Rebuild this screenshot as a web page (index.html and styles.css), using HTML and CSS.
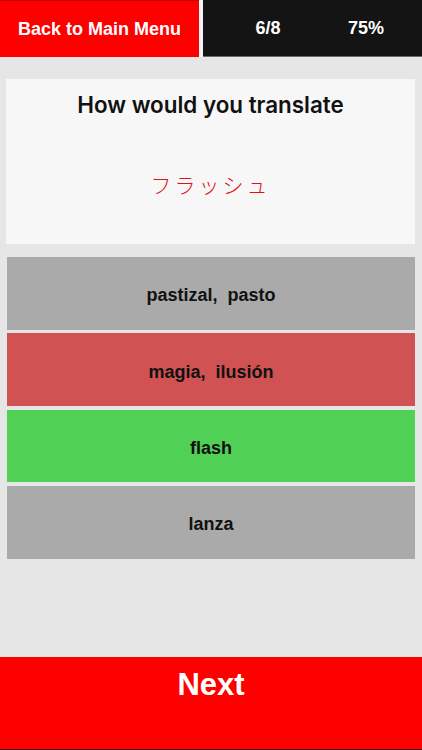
FILE: index.html
```html
<!DOCTYPE html>
<html>
<head>
<meta charset="utf-8">
<link rel="stylesheet" href="styles.css">
</head>
<body>
<div class="screen">
  <header class="topbar">
    <div class="back">Back to Main Menu</div>
    <div class="divider"></div>
    <div class="stats">
      <span class="count">6/8</span>
      <span class="pct">75%</span>
    </div>
  </header>
  <main class="content">
    <section class="card">
      <h1 class="prompt">How would you translate</h1>
      <p class="word">フラッシュ</p>
    </section>
    <div class="options">
      <div class="option neutral">pastizal,&nbsp; pasto</div>
      <div class="option wrong">magia,&nbsp; ilusión</div>
      <div class="option right">flash</div>
      <div class="option neutral">lanza</div>
    </div>
  </main>
  <footer class="next">Next</footer>
</div>
</body>
</html>
```

FILE: styles.css
```css
html, body {
  margin: 0;
  padding: 0;
}
body {
  background: #e6e6e6;
  font-family: "Liberation Sans", Arial, sans-serif;
}
.screen {
  width: 422px;
  height: 750px;
  display: flex;
  flex-direction: column;
  background: #e6e6e6;
}
.topbar {
  height: 57px;
  display: flex;
  background: #f4f4f4;
  flex: none;
}
.back {
  width: 199px;
  background: #ff0000;
  border-top: 1px solid #c00000;
  box-sizing: border-box;
  color: #fff;
  font-weight: bold;
  font-size: 18px;
  display: flex;
  align-items: center;
  justify-content: center;
  padding-top: 1px;
}
.divider {
  width: 4px;
}
.stats {
  flex: 1;
  background: #141414;
  border-bottom: 1px solid #6a6a6a;
  box-sizing: border-box;
  display: flex;
  align-items: center;
  color: #fff;
  font-weight: bold;
  font-size: 18px;
  padding-top: 1px;
}
.count {
  width: 130px;
  text-align: center;
}
.pct {
  width: 66px;
  text-align: center;
}
.content {
  flex: 1;
  padding: 22px 7px 0 6px;
  display: flex;
  flex-direction: column;
}
.card {
  background: #f7f7f7;
  height: 165px;
  display: flex;
  flex-direction: column;
  align-items: center;
}
.prompt {
  margin: 13px 0 0;
  font-family: Inter, "Liberation Sans", sans-serif;
  font-weight: 600;
  font-size: 22.4px;
  color: #111;
  line-height: 26px;
}
.word {
  margin: 53px 0 0;
  font-family: "Noto Sans CJK JP", sans-serif;
  font-weight: 300;
  font-size: 21px;
  letter-spacing: 3px;
  color: #e3101a;
  line-height: 26px;
}
.options {
  margin: 13px 0 0 1px;
  display: flex;
  flex-direction: column;
  gap: 3.7px;
}
.option {
  height: 72.7px;
  display: flex;
  align-items: center;
  justify-content: center;
  font-weight: bold;
  font-size: 18px;
  color: #111;
  padding-top: 5px;
  box-sizing: border-box;
}
.neutral { background: #aaaaaa; }
.wrong { background: #d05252; }
.right { background: #50d055; }
.next {
  height: 93px;
  flex: none;
  background: #ff0000;
  color: #fff;
  font-weight: bold;
  font-size: 31px;
  text-align: center;
  line-height: 36px;
  padding-top: 10px;
  box-sizing: border-box;
  border-bottom: 1px solid #300;
}
```
